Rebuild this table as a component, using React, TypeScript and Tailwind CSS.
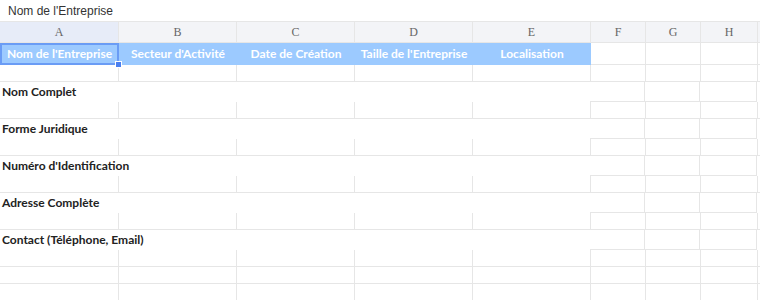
import React from 'react'

const cols = [
  { key: 'A', w: 'w-[119px]' },
  { key: 'B', w: 'w-[118px]' },
  { key: 'C', w: 'w-[118px]' },
  { key: 'D', w: 'w-[118px]' },
  { key: 'E', w: 'w-[118px]' },
  { key: 'F', w: 'w-[55px]' },
  { key: 'G', w: 'w-[55px]' },
  { key: 'H', w: 'w-[57px]' },
]

const headers = [
  "Nom de l'Entreprise",
  "Secteur d'Activité",
  'Date de Création',
  "Taille de l'Entreprise",
  'Localisation',
]

const labels = [
  'Nom Complet',
  'Forme Juridique',
  "Numéro d'Identification",
  'Adresse Complète',
  'Contact (Téléphone, Email)',
]

const line = 'border-[#e6e6e6]'

// plain row of empty cells
const EmptyRow = () => (
  <div className="flex h-[17px]">
    {cols.map((c) => (
      <div key={c.key} className={`${c.w} shrink-0 border-r border-b ${line}`} />
    ))}
    <div className={`flex-1 border-b ${line}`} />
  </div>
)

// label spills over A..E, so no inner borders there
const LabelRow = ({ text }: { text: string }) => (
  <div className="flex h-[20px]">
    <div className="w-[590px] shrink-0 flex items-center pl-[2px] text-[12px] font-bold text-[#222] whitespace-nowrap">
      {text}
    </div>
    <div className={`w-[55px] shrink-0 border-r border-b ${line}`} />
    <div className={`w-[55px] shrink-0 border-r border-b ${line}`} />
    <div className={`w-[57px] shrink-0 border-r border-b ${line}`} />
    <div className="flex-1" />
  </div>
)

export default function App() {
  return (
    <div className="w-[760px] h-[300px] overflow-hidden bg-white" style={{ fontFamily: 'Lato, sans-serif' }}>
      {/* formula bar */}
      <div
        className={`h-[22px] flex items-center pl-[8px] border-b ${line} text-[12px] text-[#333]`}
        style={{ fontFamily: '"Liberation Sans", Arial, sans-serif' }}
      >
        Nom de l'Entreprise
      </div>

      {/* column letters */}
      <div className={`flex h-[21px] bg-[#f3f4f7] border-b ${line}`}>
        {cols.map((c, i) => (
          <div
            key={c.key}
            className={`${c.w} shrink-0 border-r ${line} flex items-center justify-center text-[12px] text-[#666] ${i === 0 ? 'bg-[#e7ecf8]' : ''}`}
            style={{ fontFamily: '"Liberation Serif", serif' }}
          >
            {c.key}
          </div>
        ))}
        <div className="flex-1" />
      </div>

      {/* header row */}
      <div className="relative flex h-[22px]">
        {headers.map((h, i) => (
          <div
            key={h}
            className={`${cols[i].w} shrink-0 bg-[#9ccaff] flex items-center justify-center text-[12px] font-bold text-white whitespace-nowrap`}
          >
            {h}
          </div>
        ))}
        {cols.slice(5).map((c) => (
          <div key={c.key} className={`${c.w} shrink-0 border-r border-b ${line}`} />
        ))}
        <div className={`flex-1 border-b ${line}`} />
        {/* selection */}
        <div className="absolute left-0 top-0 w-[119px] h-[22px] border-2 border-[#6a9cf5] pointer-events-none" />
        <div className="absolute left-[115px] top-[18px] w-[7px] h-[7px] bg-[#4a7ff0] border border-white" />
      </div>

      <EmptyRow />

      {labels.map((l, i) => (
        <React.Fragment key={l}>
          <LabelRow text={l} />
          <EmptyRow />
          {i === labels.length - 1 && (
            <>
              <EmptyRow />
              <EmptyRow />
            </>
          )}
        </React.Fragment>
      ))}
    </div>
  )
}
